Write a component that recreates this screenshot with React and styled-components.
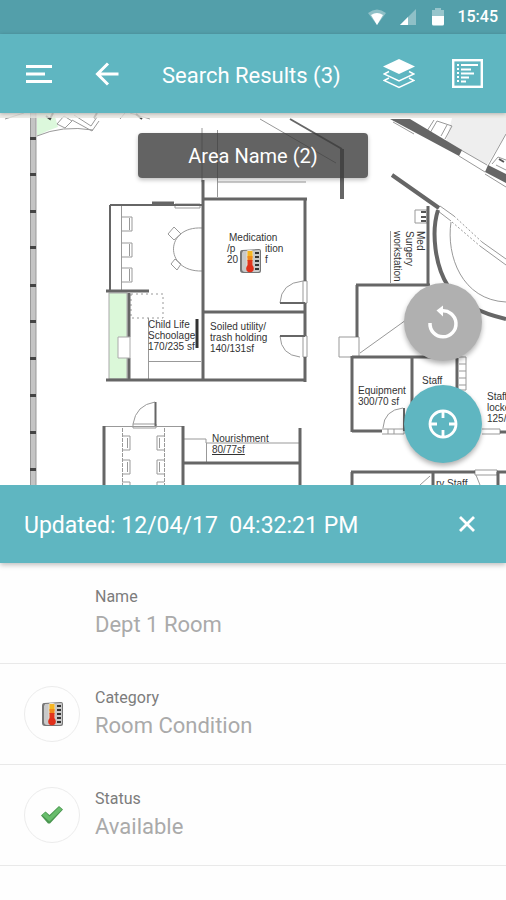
import React, { useState } from 'react';
import styled, { createGlobalStyle } from 'styled-components';

const GlobalStyle = createGlobalStyle`
  * {
    box-sizing: border-box;
  }

  body {
    margin: 0;
    background-color: #fefefe;
    font-family: Roboto, "Noto Sans", sans-serif;
  }

  svg {
    display: block;
  }
`;

const Screen = styled.div`
  display: flex;
  flex-direction: column;
`;

const StatusBar = styled.div`
  display: flex;
  align-items: center;
  justify-content: flex-end;
  height: 34px;
  padding-right: 8px;
  background-color: #539faa;
  color: #fff;
`;

const StatusIcons = styled.div`
  display: flex;
  align-items: center;
  gap: 14px;
  margin-right: 11px;
`;

const Clock = styled.time`
  font-size: 16px;
  font-weight: 500;
  line-height: 20px;
`;

const AppBar = styled.header`
  position: relative;
  z-index: 1;
  display: flex;
  align-items: center;
  height: 79px;
  padding: 0 22px;
  background-color: #5fb6c1;
  color: #fff;
  box-shadow: 0 1px 4px rgba(0, 0, 0, 0.25);
`;

const Title = styled.h1`
  flex: 1;
  margin: 0 0 0 38px;
  padding-top: 5px;
  font-size: 22px;
  font-weight: 400;
  line-height: 28px;
  white-space: nowrap;
`;

const IconButton = styled.button`
  display: flex;
  align-items: center;
  justify-content: center;
  flex: none;
  width: 34px;
  height: 40px;
  margin-left: ${(props) => props.$gap || 0}px;
  padding: 0;
  border: none;
  background: none;
  color: inherit;
  cursor: pointer;
`;

const MapArea = styled.main`
  position: relative;
  background-color: #fff;
`;

const Plan = styled.svg`
  width: 100%;
  height: auto;
  font-family: "Liberation Sans", Arial, sans-serif;
  font-size: 10px;
`;

const AreaButton = styled.button`
  position: absolute;
  top: 20px;
  left: 50%;
  width: 230px;
  height: 45px;
  transform: translateX(-50%);
  border: none;
  border-radius: 4px;
  background-color: rgba(60, 60, 60, 0.8);
  color: #fff;
  font-family: inherit;
  font-size: 20px;
  box-shadow: 0 2px 4px rgba(0, 0, 0, 0.25);
  cursor: pointer;
`;

const MapActions = styled.div`
  position: absolute;
  right: 24px;
  bottom: 22px;
  display: flex;
  flex-direction: column;
  gap: 24px;
`;

const Fab = styled.button`
  display: flex;
  align-items: center;
  justify-content: center;
  width: 78px;
  height: 78px;
  padding: 0;
  border: none;
  border-radius: 50%;
  background-color: ${(props) => (props.$primary ? '#5fb6c1' : '#b0b0b0')};
  box-shadow: 0 3px 5px rgba(0, 0, 0, 0.3);
  cursor: pointer;
`;

const PanelHeader = styled.div`
  display: flex;
  align-items: center;
  justify-content: space-between;
  height: 78px;
  padding: 0 22px 0 24px;
  background-color: #5fb6c1;
  color: #fff;
  box-shadow: 0 2px 5px rgba(0, 0, 0, 0.25);
`;

const Updated = styled.h2`
  margin: 0;
  padding-top: 4px;
  font-size: 23px;
  font-weight: 400;
  line-height: 28px;
  white-space: pre;
`;

const Details = styled.dl`
  margin: 0;
`;

const Row = styled.div`
  display: flex;
  align-items: center;
  gap: 15px;
  min-height: 101px;
  padding: 0 24px;
  border-bottom: 1px solid #e9e9e9;
`;

const Badge = styled.div`
  display: flex;
  align-items: center;
  justify-content: center;
  width: 56px;
  height: 56px;
  border: 1px solid ${(props) => (props.$empty ? 'transparent' : '#ececec')};
  border-radius: 50%;
`;

const Label = styled.dt`
  color: #7c7c7c;
  font-size: 16px;
  line-height: 24px;
`;

const Value = styled.dd`
  margin: 0;
  color: #aaa;
  font-size: 22px;
  line-height: 32px;
`;

function Thermometer(props) {
  return (
    <svg width="22" height="26" viewBox="0 0 22 26" aria-hidden="true" {...props}>
      <path d="M3 2 L20 1 Q22 1 22 3 V23 Q22 25 20 25 H4 Q1 25 1 22 V5 Q1 2 3 2Z" fill="#777" />
      <path d="M4 3 L20 2 Q21 2 21 3 V22 Q21 24 19 24 H6 Q3 24 3 21 V5Z" fill="#c9c9c9" />
      <rect x="7.500" y="2" width="6.500" height="20" rx="2" fill="#e8e0d4" />
      <rect x="8.500" y="3" width="5" height="7" fill="#f5b623" />
      <rect x="8.500" y="8" width="5" height="5" fill="#f08a1c" />
      <rect x="8.500" y="12" width="5" height="8" fill="#e0361d" />
      <circle cx="11" cy="20.500" r="3.800" fill="#e0301b" />
      <path d="M16 5h4M16 9h4M16 13h4M16 17h4M16 21h4" stroke="#333" strokeWidth="1.800" />
    </svg>
  );
}

function Check() {
  return (
    <svg width="24" height="22" viewBox="0 0 24 22" aria-hidden="true">
      <path d="M1 11.500 L5.500 7.500 L9.500 11 L19 2 L23 5.500 L10 19.500 H8Z" fill="#4a9650" />
      <path d="M2 11 L5.500 8.300 L9.500 12.500 L19 3 L22 5.500 L9.500 17.500Z" fill="#68bd6c" />
    </svg>
  );
}

const details = [
  { label: 'Name', value: 'Dept 1 Room' },
  { label: 'Category', value: 'Room Condition', icon: <Thermometer /> },
  { label: 'Status', value: 'Available', icon: <Check /> },
];

const wallTicks = [138, 174, 211, 247, 285, 321, 358, 395, 432, 469];

function FloorPlan() {
  return (
    <Plan viewBox="0 113 506 372" fill="none" role="img" aria-label="Floor plan">
      {/* outer wall */}
      <rect x="30" y="113" width="6" height="372" fill="#c4c4c4" />
      <path d="M30.500 113V485M36 113V485" stroke="#999" />
      {wallTicks.map((y) => (
        <rect key={y} x="30" y={y - 1} width="6" height="3" fill="#444" />
      ))}

      {/* filled zones */}
      <path d="M37 113H54L58 127Q48 130 37 136Z" fill="#dcf8dc" />
      <rect x="109" y="293" width="18" height="86" fill="#dbf8d9" stroke="#aaa" />
      <path d="M452 118H506V134L487 165L461 150L446 141Z" fill="#eeeeee" />

      {/* thin lines */}
      <g stroke="#999">
        <path d="M5 119L24 113M37 136Q62 125 93 130M57 124L64 116L72 121L65 128ZM72 120L92 131L99 121M74 115L91 126L97 117M120 119L125 113M130 113L150 119" />
        <path d="M202 128V182M217.500 130V197M217 182H306M260 119L336 163" />
        <path d="M121.500 206V290M121 217H132V231H121M129.500 218V230M121 243H132V257H121M129.500 244V256M121 268H132V282H121M129.500 269V281" />
        <path d="M175 204H200V208H175ZM202 228C164 226 164 272 202 271" />
        <path d="M174 227L181 234L174 240L168 234ZM175 259L181 264L177 270L171 264Z" />
        <path d="M148.500 318V380M148 361.500H201M280 303Q281 283 303 281M303 281H307V303H303ZM280 336Q281 355 300 357M303 336H307V357H303Z" />
        <path d="M131 294H163V318H131Z" strokeDasharray="2 3" />
        <path d="M133 424Q136 405 155 402M104 426.500H183M133 424H156V428H133Z" />
        <path d="M122.500 428V485M164.500 428V485" strokeDasharray="4 1" />
        <path d="M122 436H130V450H122M122 460H130V474H122M122 482H130V485M164 436H157V450H164M164 460H157V474H164M164 482H157V485" />
        <path d="M127.500 438V448M127.500 462V472M159.500 438V448M159.500 462V472" />
        <path d="M184 439H206V443H299M206.500 443V462" />
        <path d="M415 210H427V223H415ZM390.500 231V283M339 337H359V357H339ZM360 353L406 320" />
        <path d="M427 131L434 120M430 133L437 121L452 126L445 139M441 136L447 125" />
        <path d="M393 122L414 134M461 150L487 165M459 156L485 172M485 174L506 187M506 134L488 166M492 164L498 157L506 160M496 165L506 170" />
        <path d="M440 206L454 216M438 211L451 221M482 242L506 259M480 246L506 265" />
        <path d="M454 216L482 242M452 222L480 246" strokeDasharray="2 2" />
        <path d="M451 222C446 256 462 300 506 302" />
        <path d="M459 357H466V390H459M459 364H466M459 371H466M459 378H466M459 385H466" />
        <path d="M383 428Q384 410 403 408M382 429H404V434H382M388 429V434M394 429V434M482 429H500V434H482" />
        <path d="M475 470H497V475H475ZM420 485L430 476M476 475L480 485" />
      </g>

      {/* walls */}
      <g stroke="#666" strokeWidth="4">
        <path d="M203 180V380M202 199H307M305 199V281M305 303V336M305 357V382M203 312H305M106 380H306" strokeWidth="3" />
        <path d="M106 291H149M152 203H174M129 293V337M129 358V379" strokeWidth="3" />
        <path d="M110 205V290M110 205H202M280 303H305M280 336H305M155.500 402V426M404 408V431" strokeWidth="2" />
        <path d="M104 426V485M183 426V485M183 463H300M300 428V485" strokeWidth="3" />
        <path d="M290 119L342 149" strokeWidth="2" />
        <path d="M342 149V199M392 175L439 208" />
        <path d="M428 206V285M356 285H430M357 285V337M352 357H445M352 356V432M352 431H382M412 357V422M457 358V392" strokeWidth="3" />
        <path d="M438 210C431 232 435 266 448 286C462 304 480 313 506 319" />
        <path d="M351 472H475M352 472V485M433 472V485M497 472H506M498 472V485M500 432H506" strokeWidth="3" />
      </g>
      <path d="M390 119H410L462 150L459 156ZM488 165L506 174V183L485 172Z" fill="#666" />
      <path d="M118 337H130V358H118Z" fill="#fff" stroke="#aaa" />
      <path d="M197 319V348" stroke="#333" strokeWidth="3" />
      <path d="M46 116L50 119L53 113M97 113L94 118M136 114L142 119" stroke="#444" strokeWidth="2" />
      <path d="M426 212H421M426 217H421M426 221H421M499 159L504 162" stroke="#555" strokeWidth="2" />

      {/* strip under the app bar */}
      <rect x="0" y="113" width="506" height="5" fill="#e9e7e2" opacity="0.8" />

      {/* room names */}
      <g fill="#333">
        <text x="229" y="241">Medication</text>
        <text x="227" y="252">/p</text>
        <text x="265" y="252">ition</text>
        <text x="227" y="263">20</text>
        <text x="265" y="263">f</text>
        <text x="148" y="328">Child Life</text>
        <text x="148" y="339">Schoolage</text>
        <text x="148" y="350">170/235 sf</text>
        <text x="210" y="330">Soiled utility/</text>
        <text x="210" y="341">trash holding</text>
        <text x="210" y="352">140/131sf</text>
        <text x="212" y="442">Nourishment</text>
        <text x="212" y="453" textDecoration="underline">80/77sf</text>
        <text x="358" y="394">Equipment</text>
        <text x="358" y="405">300/70 sf</text>
        <text x="422" y="384">Staff</text>
        <text x="487" y="400">Staff</text>
        <text x="487" y="411">locker</text>
        <text x="487" y="422">125/</text>
        <text x="436" y="487">ry Staff</text>
        <text transform="translate(417 231) rotate(90)">Med</text>
        <text transform="translate(406 231) rotate(90)">Surgery</text>
        <text transform="translate(394 231) rotate(90)">workstation</text>
      </g>

      <Thermometer x="239" y="248" />
    </Plan>
  );
}

function App() {
  const [open, setOpen] = useState(true);

  return (
    <Screen>
      <GlobalStyle />
      <StatusBar>
        <StatusIcons>
          <svg width="18" height="16" viewBox="0 0 18 16" fill="#fff">
            <path d="M0 4Q9 -3 18 4L9 16Z" opacity="0.35" />
            <path d="M3 6Q9 2 15 6L9 16Z" />
          </svg>
          <svg width="16" height="16" viewBox="0 0 16 16" fill="#fff">
            <path d="M16 0V16H0Z" opacity="0.35" />
            <path d="M8 8V16H0Z" />
          </svg>
          <svg width="16" height="18" viewBox="2 0 16 18" fill="#fff">
            <path d="M4 2H7V0H13V2H16V9H4Z" opacity="0.4" />
            <path d="M4 8H16V16Q16 17.500 14.500 17.500H5.500Q4 17.500 4 16Z" />
          </svg>
        </StatusIcons>
        <Clock>15:45</Clock>
      </StatusBar>

      <AppBar>
        <IconButton type="button" aria-label="Menu">
          <svg width="26" height="18" viewBox="0 0 26 18" stroke="#fff" strokeWidth="3">
            <path d="M0 1.500H26M0 9H19M0 16.500H26" />
          </svg>
        </IconButton>
        <IconButton type="button" aria-label="Back" $gap={34}>
          <svg width="24" height="24" viewBox="0 0 24 24" fill="none" stroke="#fff" strokeWidth="3">
            <path d="M23.500 12H3M13 1.500L2.500 12L13 22.500" />
          </svg>
        </IconButton>
        <Title>Search Results (3)</Title>
        <IconButton type="button" aria-label="Layers">
          <svg width="32" height="30" viewBox="0 0 32 30" fill="none" stroke="#fff" strokeWidth="1.500">
            <path d="M16 0L32 7.500L16 15L0 7.500Z" fill="#fff" stroke="none" />
            <path d="M6 12.500L1 15L16 22L31 15L26 12.500" />
            <path d="M6 19L1 21.500L16 28.500L31 21.500L26 19" />
          </svg>
        </IconButton>
        <IconButton type="button" aria-label="List" $gap={34}>
          <svg width="31" height="29" viewBox="0 0 31 29" fill="none" stroke="#fff">
            <rect x="1.200" y="1.200" width="28.600" height="26.600" strokeWidth="2.400" />
            <path d="M9 6H26M9 10.500H19M9 14.500H22M9 18.500H17M9 22.500H14" strokeWidth="2" />
            <path d="M6 5V24" strokeWidth="2" strokeDasharray="2 2" />
          </svg>
        </IconButton>
      </AppBar>

      <MapArea>
        <FloorPlan />
        <AreaButton type="button">Area Name (2)</AreaButton>
        <MapActions>
          <Fab type="button" aria-label="Reset view">
            <svg width="32" height="34" viewBox="0 0 32 34" fill="none" stroke="#fff" strokeWidth="3.500">
              <path d="M3 18A13 13 0 1 0 14 6" />
              <path d="M9.500 5.500L16 0.500V11.500Z" fill="#fff" stroke="none" />
            </svg>
          </Fab>
          <Fab type="button" aria-label="Locate" $primary>
            <svg width="30" height="30" viewBox="0 0 30 30" fill="none" stroke="#fff" strokeWidth="2.800">
              <circle cx="15" cy="15" r="13" />
              <path d="M15 2V9M15 21V28M2 15H9M21 15H28" />
            </svg>
          </Fab>
        </MapActions>
      </MapArea>

      {open && (
        <section>
          <PanelHeader>
            <Updated>Updated: 12/04/17  04:32:21 PM</Updated>
            <IconButton type="button" aria-label="Close" onClick={() => setOpen(false)}>
              <svg width="16" height="16" viewBox="0 0 16 16" stroke="#fff" strokeWidth="2.800">
                <path d="M1 1L15 15M15 1L1 15" />
              </svg>
            </IconButton>
          </PanelHeader>
          <Details>
            {details.map((item) => (
              <Row key={item.label}>
                <Badge $empty={!item.icon}>{item.icon}</Badge>
                <div>
                  <Label>{item.label}</Label>
                  <Value>{item.value}</Value>
                </div>
              </Row>
            ))}
          </Details>
        </section>
      )}
    </Screen>
  );
}

export default App;
